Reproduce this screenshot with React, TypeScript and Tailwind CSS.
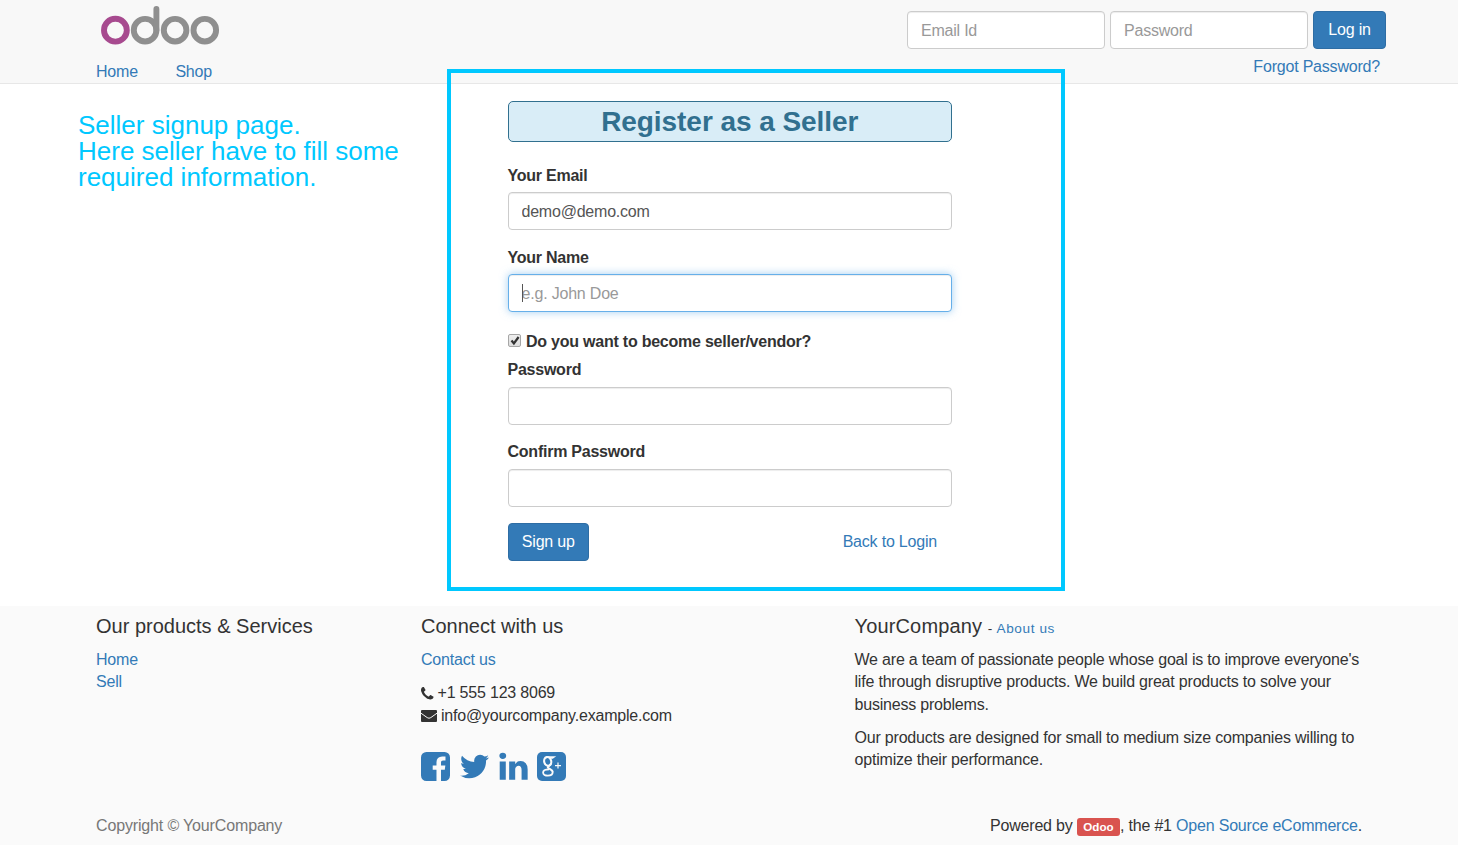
import React from 'react';

const LINK = 'text-[#337ab7]';
const FIELD =
  'h-[38px] w-full rounded-[4px] border border-[#ccc] bg-white px-[13px] pt-px text-[16px] tracking-[-0.22px] text-[#555] shadow-[inset_0_1px_1px_rgba(0,0,0,0.075)] outline-none placeholder:text-[#999]';
const LABEL = 'block h-[22px] leading-[22px] font-bold tracking-[-0.24px]';
const HEADING = 'mb-[11px] h-[24px] text-[20px] leading-[24px] tracking-normal whitespace-nowrap';

function Logo() {
  return (
    <svg width="120" height="46" viewBox="0 0 120 46" fill="none" strokeWidth="5.9" aria-label="odoo">
      <circle cx="15.4" cy="30.2" r="11.4" stroke="#a74a8f" />
      <g stroke="#8f8f8f">
        <circle cx="45.1" cy="30.2" r="11.3" />
        <path d="M56.4 30V9" strokeLinecap="round" />
        <circle cx="75.1" cy="30.2" r="11.3" />
        <circle cx="104.8" cy="30.2" r="11.3" />
      </g>
    </svg>
  );
}

function Glyph({ d, className, box = '0 0 1792 1792' }: { d: string; className: string; box?: string }) {
  return (
    <svg viewBox={box} className={className} fill="currentColor" aria-hidden="true">
      <path d={d} />
    </svg>
  );
}

const PHONE =
  'M1408 1240q0 27-10 70.5t-21 68.5q-21 50-122 106-94 51-186 51-27 0-53-3.5t-57.5-12.5-47-14.5-55.5-20.5-49-18q-98-35-175-83-127-79-264-216t-216-264q-48-77-83-175-3-9-18-49t-20.5-55.5-14.5-47-12.5-57.5-3.5-53q0-92 51-186 56-101 106-122 25-11 68.5-21t70.5-10q14 0 21 3 18 6 53 76 11 19 30 54t35 63.5 31 53.5q3 4 17.5 25t21.5 35.5 7 28.5q0 20-28.5 50t-62 55-62 53-28.5 46q0 9 5 22.5t8.5 20.5 14 24 11.5 19q76 137 174 235t235 174q2 1 19 11.5t24 14 20.5 8.5 22.5 5q18 0 46-28.5t53-62 55-62 50-28.5q14 0 28.5 7t35.5 21.5 25 17.5q25 15 53.5 31t63.5 35 54 30q70 35 76 53 3 7 3 21z';
const FACEBOOK =
  'M1376 128q119 0 203.5 84.5t84.5 203.5v960q0 119-84.5 203.5t-203.5 84.5h-188v-595h199l30-232h-229v-148q0-56 23.5-84t91.5-28l122-1v-207q-63-9-178-9-136 0-217.5 80t-81.5 226v171h-200v232h200v595h-532q-119 0-203.5-84.5t-84.5-203.5v-960q0-119 84.5-203.5t203.5-84.5h960z';
const TWITTER =
  'M1684 408q-67 98-162 167 1 14 1 42 0 130-38 259.5t-115.5 248.5-184.5 210.5-258 146-323 54.5q-271 0-496-145 35 4 78 4 225 0 401-138-105-2-188-64.5t-114-159.5q33 5 61 5 43 0 85-11-112-23-185.5-111.5t-73.5-205.5v-4q68 38 146 41-66-44-105-115t-39-154q0-88 44-163 121 149 294.5 238.5t371.5 99.5q-8-38-8-74 0-134 94.5-228.5t228.5-94.5q140 0 236 102 109-21 205-78-37 115-142 178 93-10 186-50z';
const LINKEDIN =
  'M477 625v991h-330v-991h330zm21-306q1 73-50.5 122t-135.5 49h-2q-82 0-132-49t-50-122q0-74 51.5-122.5t134.5-48.5 133 48.5 51 122.5zm1166 729v568h-329v-530q0-105-40.5-164.5t-126.5-59.5q-63 0-105.5 34.5t-63.5 85.5q-11 30-11 81v553h-329q2-399 2-647t-1-296l-1-48h329v144h-2q20-32 41-56t56.5-52 87-43.5 114.5-15.5q171 0 275 113.5t104 332.5z';

function Envelope() {
  return (
    <svg viewBox="0 0 16 12" className="h-[12px] w-[16px]" aria-hidden="true">
      <rect width="16" height="12" rx="1" fill="currentColor" />
      <path d="M0 3.200L6.200 7.600Q8 8.900 9.800 7.600L16 3.200" fill="none" stroke="#fafafa" strokeWidth="1" />
    </svg>
  );
}

function GooglePlus() {
  return (
    <svg viewBox="0 0 29 29" className="h-[29px] w-[29px]" fill="none" aria-hidden="true">
      <rect width="29" height="29" rx="5" fill="#337ab7" />
      <g stroke="#fafafa">
        <ellipse cx="10.7" cy="9.4" rx="3.5" ry="4.4" strokeWidth="2.1" transform="rotate(-14 10.7 9.4)" />
        <path d="M10.2 4.9h7.2l-1.8 1.3h-2.6" strokeWidth="1.2" />
        <path d="M14 11.5c0 2.4-3.4 2.4-3.2 3.9.1 1.2 4.6 1.7 5 4.8" strokeWidth="2" />
        <path d="M15.7 20c0 2.4-2.2 3.7-4.9 3.7-2.6 0-4.7-1-4.7-3.1 0-2.3 2.5-3.3 6-3.3" strokeWidth="1.8" />
        <path d="M18 13.6h6M21 10.6v6" strokeWidth="1.2" />
      </g>
    </svg>
  );
}

export default function App() {
  return (
    <div className="relative flex h-[845px] w-[1458px] flex-col overflow-hidden bg-white font-['Liberation_Sans',Arial,sans-serif] text-[16px] leading-[22.3px] tracking-[-0.2px] text-[#333]">
      <header className="flex h-[84px] shrink-0 justify-between border-b border-[#e7e7e7] bg-[#f8f8f8] pr-[72px] pl-24">
        <div className="flex flex-col">
          <a className="ml-1 h-[60.5px]"><Logo /></a>
          <nav className={`flex gap-[37.5px] ${LINK}`}>
            <a>Home</a>
            <a>Shop</a>
          </nav>
        </div>
        <div className="flex flex-col pt-[11px]">
          <form className="flex gap-[5px]">
            <div className="w-[198px]"><input className={FIELD} placeholder="Email Id" /></div>
            <div className="w-[198px]"><input className={FIELD} placeholder="Password" /></div>
            <button type="button" className="h-[38px] w-[73px] rounded-[4px] border border-[#2e6da4] bg-[#337ab7] text-white">Log in</button>
          </form>
          <a className={`mt-[7px] mr-[6px] self-end ${LINK}`}>Forgot Password?</a>
        </div>
      </header>

      <main className="flex h-[521.5px] shrink-0">
        <p className="w-[429px] pt-[28px] pl-[78px] text-[26px] leading-[26px] tracking-normal whitespace-pre text-[#00c8ff]">
          {'Seller signup page.\nHere seller have to fill some\nrequired information.'}
        </p>
        <form className="ml-[78.5px] w-[444.5px] pt-[17px]">
          <h1 className="h-[41px] rounded-[5px] border border-[#31708f] bg-[#d9edf7] text-center text-[28px] leading-[39px] font-bold tracking-[-0.06px] text-[#31708f]">
            Register as a Seller
          </h1>
          <label className={`mt-[23px] ${LABEL}`}>Your Email</label>
          <input className={`mt-[5px] block ${FIELD}`} defaultValue="demo@demo.com" />
          <label className={`mt-[17px] ${LABEL}`}>Your Name</label>
          <div className="relative mt-[5px]">
            <input
              className="block h-[38px] w-full rounded-[4px] border border-[#66afe9] bg-white px-[13px] pt-px text-[16px] tracking-[-0.2px] shadow-[inset_0_1px_1px_rgba(0,0,0,0.075),0_0_9px_rgba(102,175,233,0.6)] outline-none placeholder:text-[#999]"
              placeholder="e.g. John Doe"
            />
            <span className="absolute top-[10px] left-[14px] h-[18px] w-px bg-[#555]" />
          </div>
          <label className="mt-[19px] flex h-[22px] font-bold tracking-[-0.23px]">
            <span className="mt-[3px] mr-[5px] h-[13px] w-[13.5px] rounded-[2px] border border-[#a6a6a6] bg-linear-to-b from-[#eee] to-[#ddd]">
              <svg viewBox="0 0 12 11" className="h-[11px] w-[12px]" fill="none" stroke="#333" strokeWidth="2.2">
                <path d="M2.5 5.5l2.4 3L9.6 2" />
              </svg>
            </span>
            Do you want to become seller/vendor?
          </label>
          <label className={`mt-[6px] ${LABEL}`}>Password</label>
          <input type="password" className={`mt-[6px] block ${FIELD}`} />
          <label className={`mt-[16px] ${LABEL}`}>Confirm Password</label>
          <input type="password" className={`mt-[6px] block ${FIELD}`} />
          <div className="mt-[16px] flex items-center justify-between">
            <button type="button" className="h-[38px] w-[81.5px] rounded-[4px] border border-[#2e6da4] bg-[#337ab7] text-white">Sign up</button>
            <a className={`mr-[15px] ${LINK}`}>Back to Login</a>
          </div>
        </form>
      </main>

      <footer className="flex grow flex-col bg-[#fafafa] pr-24 pl-24">
        <div className="flex h-[209.5px] pt-[8.5px]">
          <section className="w-[325px] shrink-0">
            <h4 className={HEADING}>Our products &amp; Services</h4>
            <ul className={LINK}>
              <li>Home</li>
              <li>Sell</li>
            </ul>
          </section>
          <section className="w-[433.5px] shrink-0">
            <h4 className={HEADING}>Connect with us</h4>
            <a className={`block ${LINK}`}>Contact us</a>
            <p className="mt-[11px] flex items-center gap-[4px]">
              <Glyph d={PHONE} box="0 128 1408 1408" className="h-[12.5px] w-[12.5px]" />+1 555 123 8069
            </p>
            <p className="flex items-center gap-1">
              <Envelope />info@yourcompany.example.com
            </p>
            <div className={`mt-[23.5px] flex items-center ${LINK}`}>
              <Glyph d={FACEBOOK} box="128 128 1536 1536" className="h-[29px] w-[29px]" />
              <Glyph d={TWITTER} className="ml-[8px] h-[33px] w-[33px]" />
              <Glyph d={LINKEDIN} className="ml-[5.5px] h-[33px] w-[33px]" />
              <span className="ml-[7.5px]"><GooglePlus /></span>
            </div>
          </section>
          <section className="w-[520px] shrink-0">
            <h4 className={HEADING}>
              <span className="tracking-[0.15px]">YourCompany</span>{' '}
              <small className="text-[13.6px] tracking-[0.6px]">- <a className={LINK}>About us</a></small>
            </h4>
            <p className="whitespace-pre">
              {"We are a team of passionate people whose goal is to improve everyone's\nlife through disruptive products. We build great products to solve your\nbusiness problems."}
            </p>
            <p className="mt-[11px] whitespace-pre">
              {'Our products are designed for small to medium size companies willing to\noptimize their performance.'}
            </p>
          </section>
        </div>
        <div className="flex justify-between">
          <span className="tracking-[-0.15px] text-[#777]">Copyright © YourCompany</span>
          <p className="flex whitespace-pre">
            Powered by{' '}
            <span className="mt-[3px] h-[18px] rounded-[3px] bg-[#d9534f] px-[6.5px] text-[11.6px] leading-[18px] font-bold tracking-normal text-white">Odoo</span>
            , the #1 <a className={LINK}>Open Source eCommerce</a>.
          </p>
        </div>
      </footer>

      <div className="pointer-events-none absolute top-[69px] left-[447px] h-[522px] w-[618px] border-4 border-[#00c8ff]" />
    </div>
  );
}
